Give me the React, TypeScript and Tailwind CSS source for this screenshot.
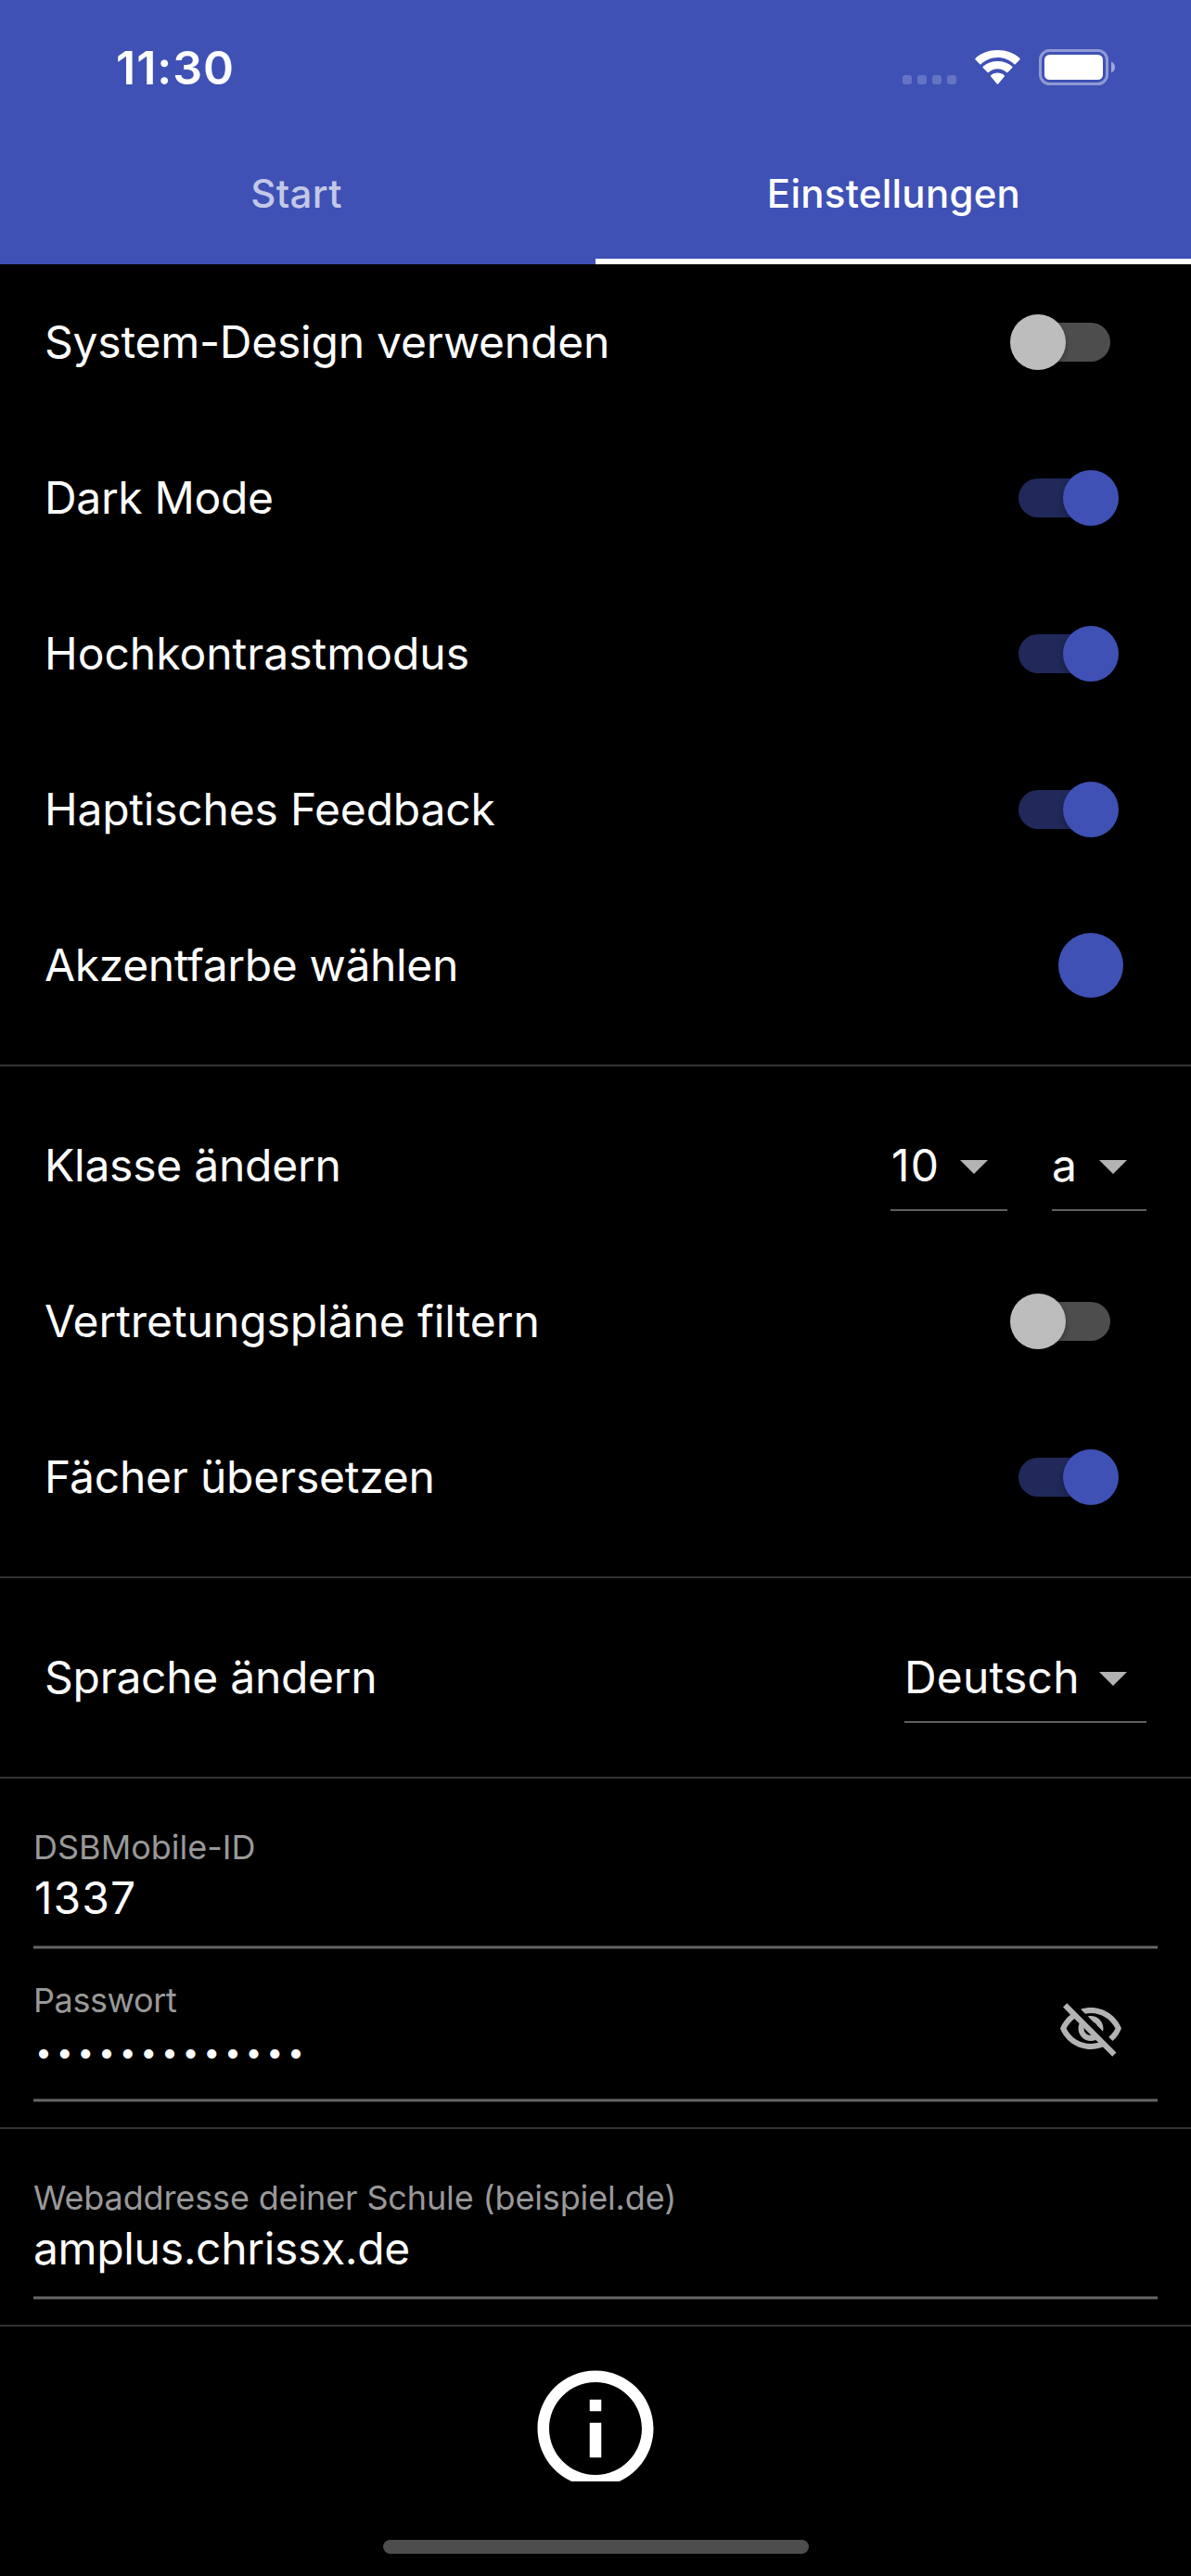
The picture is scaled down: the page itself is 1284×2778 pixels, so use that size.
import type { ReactNode } from "react";

function StatusIcons() {
  return (
    <svg width="232" height="48" viewBox="0 0 232 48" fill="none">
      <g fill="#fff" fillOpacity="0.2">
        <rect x="3" y="33" width="10" height="10" rx="3" />
        <rect x="19" y="33" width="10" height="10" rx="3" />
        <rect x="35" y="33" width="10" height="10" rx="3" />
        <rect x="51" y="33" width="10" height="10" rx="3" />
      </g>
      <g fill="#fff">
        <path d="M105.5 14c6.9 0 13.2 2.7 17.900 7.200.35.340.900.330 1.250-.010l4.900-4.900c.360-.360.360-.940-.010-1.300C123.100 9.100 114.700 6.100 105.500 6.100S87.900 9.100 81.500 15c-.370.360-.370.940-.010 1.300l4.900 4.900c.350.340.900.350 1.250.010 4.700-4.500 11-7.210 17.860-7.210z" />
        <path d="M105.5 26.300c3.700 0 7.100 1.400 9.700 3.700.360.320.900.310 1.240-.030l4.900-4.950c.370-.370.360-.970-.020-1.320-4.200-3.900-9.700-5.800-15.800-5.800s-11.600 1.900-15.800 5.800c-.380.350-.390.950-.020 1.320l4.900 4.950c.340.340.880.350 1.240.030 2.600-2.300 6-3.700 9.660-3.700z" />
        <path d="M112.800 34.600c.400-.360.380-.980-.030-1.320-2-1.650-4.400-2.680-7.270-2.680s-5.270 1.030-7.270 2.680c-.410.340-.430.960-.030 1.320l6.650 7.900c.360.400.960.400 1.320 0z" />
      </g>
      <rect x="151.5" y="6.5" width="72" height="36" rx="10" stroke="#fff" strokeOpacity="0.42" strokeWidth="3" />
      <rect x="156" y="11" width="63" height="27" rx="5.5" fill="#fff" />
      <path d="M228 18.500v12c2.400-1 4-3.300 4-6s-1.600-5-4-6z" fill="#fff" fillOpacity="0.5" />
    </svg>
  );
}

function Toggle({ on }: { on: boolean }) {
  return (
    <div className="relative mr-[78px] flex h-[60px] w-[117px] items-center justify-center">
      <div className={on ? "h-[42px] w-[99px] rounded-full bg-[#202959]" : "h-[42px] w-[99px] rounded-full bg-[#4d4d4d]"} />
      <div
        className={
          on
            ? "absolute right-0 top-0 size-[60px] rounded-full bg-[#3f51b5] shadow-[0_3px_6px_rgba(0,0,0,0.3)]"
            : "absolute left-0 top-0 size-[60px] rounded-full bg-[#bdbdbd] shadow-[0_3px_6px_rgba(0,0,0,0.3)]"
        }
      />
    </div>
  );
}

function Row({ label, spacing, children }: { label: string; spacing: string; children: ReactNode }) {
  return (
    <div className="flex h-[168px] items-center justify-between pl-12">
      <span className={`whitespace-nowrap text-[48px] leading-[60px] ${spacing}`}>{label}</span>
      {children}
    </div>
  );
}

function Select({ value, className }: { value: string; className: string }) {
  return (
    <div className={`flex h-[98px] items-center justify-between border-b-2 border-[#5f5f5f] pt-0.5 ${className}`}>
      <span className="text-[48px] leading-[60px]">{value}</span>
      <svg width="72" height="72" viewBox="0 0 24 24" fill="#b3b3b3">
        <path d="M7 10l5 5 5-5z" />
      </svg>
    </div>
  );
}

function Divider({ className }: { className: string }) {
  return <div className={`h-0.5 bg-[#333] ${className}`} />;
}

function Field({ label, spacing, children }: { label: string; spacing: string; children: ReactNode }) {
  return (
    <div className="mx-9 pt-[29px]">
      <div className={`h-11 whitespace-nowrap text-[36px] leading-[44px] text-[#999] ${spacing}`}>{label}</div>
      <div className="mt-[3px] flex h-[60px] items-center text-[48px] leading-[60px]">{children}</div>
      <div className="mt-[21px] h-1 border-y border-[#333] bg-[#666]" />
    </div>
  );
}

export default function App() {
  return (
    <div className="flex h-[2778px] w-[1284px] flex-col overflow-hidden bg-black font-['Inter',sans-serif] text-white">
      <header className="h-[285px] bg-[#3f51b5]">
        <div className="flex h-[141px] items-start justify-between pl-[125px] pr-[82px]">
          <span className="mt-[43px] text-[50px] font-semibold leading-[60px] tracking-[0.99px]">11:30</span>
          <div className="mt-12">
            <StatusIcons />
          </div>
        </div>
        <nav className="grid h-36 grid-cols-2 text-center text-[42px] font-medium leading-[136px]">
          <div className="pr-[3px] text-white/70 tracking-[0.4px]">Start</div>
          <div className="border-b-[6px] border-white pl-px tracking-[0.25px]">Einstellungen</div>
        </nav>
      </header>

      <main>
        <Row label="System-Design verwenden" spacing="tracking-[-0.23px]">
          <Toggle on={false} />
        </Row>
        <Row label="Dark Mode" spacing="tracking-[-0.35px]">
          <Toggle on />
        </Row>
        <Row label="Hochkontrastmodus" spacing="tracking-[-0.02px]">
          <Toggle on />
        </Row>
        <Row label="Haptisches Feedback" spacing="tracking-[-0.22px]">
          <Toggle on />
        </Row>
        <Row label="Akzentfarbe wählen" spacing="tracking-[-0.36px]">
          <div className="mr-[73px] size-[70px] rounded-full bg-[#3f51b5]" />
        </Row>
        <Divider className="my-[23px]" />

        <Row label="Klasse ändern" spacing="tracking-[-0.25px]">
          <div className="mr-12 flex gap-12">
            <Select value="10" className="w-[126px] pl-px tracking-[1.2px]" />
            <Select value="a" className="w-[102px]" />
          </div>
        </Row>
        <Row label="Vertretungspläne filtern" spacing="tracking-[-0.08px]">
          <Toggle on={false} />
        </Row>
        <Row label="Fächer übersetzen" spacing="tracking-[-0.22px]">
          <Toggle on />
        </Row>
        <Divider className="my-[23px]" />

        <Row label="Sprache ändern" spacing="tracking-[-0.28px]">
          <Select value="Deutsch" className="mr-12 w-[261px] tracking-[0.2px]" />
        </Row>
        <Divider className="my-[23px]" />

        <Field label="DSBMobile-ID" spacing="tracking-[0px]">
          <span className="pl-px tracking-[1.1px]">1337</span>
        </Field>
        <div className="relative pt-1">
          <Field label="Passwort" spacing="tracking-[-0.4px]">
            <span className="pl-0.5 pt-px text-[32px] tracking-[4.66px]">•••••••••••••</span>
          </Field>
          <svg className="absolute right-[72px] top-[51px]" width="72" height="72" viewBox="0 0 24 24" fill="#b3b3b3">
            <path d="M12 6c3.790 0 7.170 2.130 8.820 5.500-.590 1.220-1.420 2.270-2.410 3.120l1.410 1.410c1.390-1.230 2.490-2.770 3.180-4.530C21.270 7.110 17 4 12 4c-1.270 0-2.490.200-3.640.570l1.650 1.650C10.660 6.090 11.320 6 12 6zm-1.070 1.140L13 9.210c.570.250 1.030.710 1.280 1.280l2.070 2.070c.080-.340.140-.700.140-1.070C16.500 9.010 14.480 7 12 7c-.370 0-.720.050-1.070.140zM2.010 3.870l2.680 2.680C3.060 7.830 1.770 9.530 1 11.500 2.730 15.890 7 19 12 19c1.520 0 2.980-.290 4.320-.820l3.420 3.420 1.410-1.410L3.420 2.450 2.010 3.870zm7.500 7.500l2.610 2.610c-.040.010-.080.020-.120.020-1.380 0-2.500-1.120-2.500-2.500 0-.050.010-.080.010-.130zm-3.400-3.400l1.750 1.750c-.230.550-.360 1.150-.360 1.780 0 2.480 2.020 4.500 4.500 4.500.630 0 1.230-.130 1.770-.360l.980.980c-.880.240-1.800.380-2.750.380-3.790 0-7.170-2.130-8.820-5.500.700-1.430 1.720-2.610 2.930-3.530z" />
          </svg>
        </div>
        <Divider className="mb-[23px] mt-[27px]" />

        <Field label="Webaddresse deiner Schule (beispiel.de)" spacing="tracking-[-0.14px]">
          <span className="tracking-[-0.35px]">amplus.chrissx.de</span>
        </Field>
        <Divider className="mt-[27px]" />

        <div className="flex h-[167px] justify-center overflow-hidden pt-[35px]">
          <svg className="shrink-0" width="150" height="150" viewBox="0 0 24 24" fill="#fff">
            <path d="M11 7h2v2h-2zm0 4h2v6h-2zm1-9C6.480 2 2 6.480 2 12s4.480 10 10 10 10-4.480 10-10S17.520 2 12 2zm0 18c-4.410 0-8-3.590-8-8s3.590-8 8-8 8 3.590 8 8-3.590 8-8 8z" />
          </svg>
        </div>
      </main>

      <div className="mx-auto mt-[63px] h-[15px] w-[459px] shrink-0 rounded-full bg-[#4d4d4d]" />
    </div>
  );
}
